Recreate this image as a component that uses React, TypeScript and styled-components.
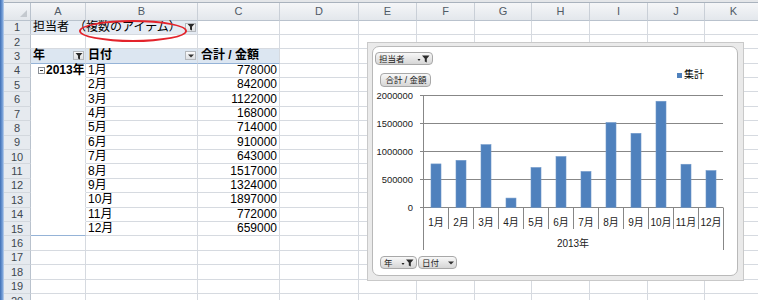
import React from "react";
import styled, { createGlobalStyle } from "styled-components";

const GlobalStyle = createGlobalStyle`
  html, body {
    margin: 0;
    padding: 0;
    background: #fff;
    overflow: hidden;
  }
  body {
    font-family: "Liberation Sans", "Noto Sans CJK JP", sans-serif;
    color: #000;
  }
`;

const COLS = ["A", "B", "C", "D", "E", "F", "G", "H", "I", "J", "K"];
const WIDTHS = [55, 112, 82, 79, 58, 58, 57, 58, 58, 57, 58];
const ROW_COUNT = 20;

const months = [
  "1月", "2月", "3月", "4月", "5月", "6月",
  "7月", "8月", "9月", "10月", "11月", "12月",
];
const amounts = [
  778000, 842000, 1122000, 168000, 714000, 910000,
  643000, 1517000, 1324000, 1897000, 772000, 659000,
];

const GRID_LINE = "#d6dae0";
const PIVOT_LINE = "#95b3d7";

const Funnel: React.FC<{ arrow?: boolean }> = ({ arrow }) => (
  <svg width={arrow ? 13 : 8} height="8" viewBox={arrow ? "0 0 13 8" : "0 0 8 8"}>
    {arrow && <path d="M0.5 4 H3.5 L2 6 Z" fill="#222" />}
    <path
      d={arrow ? "M5 0.5 H12.5 L9.8 3.8 V7.5 L7.8 6.5 V3.8 Z" : "M0.5 1 H7.5 L5 3.8 V7.5 L3 6.5 V3.8 Z"}
      fill="#2b2b2b"
    />
  </svg>
);

const DownArrow: React.FC = () => (
  <svg width="6" height="4" viewBox="0 0 6 4">
    <path d="M0 0.5 H6 L3 3.5 Z" fill="#333" />
  </svg>
);

const Sheet = styled.div`
  position: relative;
  display: flex;
  width: 758px;
  height: 300px;
  overflow: hidden;
`;

const WindowEdge = styled.div`
  width: 4px;
  flex: none;
  background: linear-gradient(to right, #3e6fb5, #7ea6dc 70%, #c9d8ec);
`;

const Main = styled.div`
  display: flex;
  flex-direction: column;
  flex: 1;
`;

const TopBar = styled.div`
  height: 2px;
  flex: none;
  background: #e4e6e9;
  border-bottom: 1px solid #a9b2bd;
`;

const Grid = styled.div`
  display: grid;
  grid-template-columns: 27px ${WIDTHS.map((w) => `${w}px`).join(" ")};
  grid-template-rows: 17.5px repeat(${ROW_COUNT}, 14.4px);
`;

const Corner = styled.div`
  position: relative;
  background: linear-gradient(#f3f5f8, #e2e6eb);
  border-right: 1px solid #b9c2cd;
  border-bottom: 1px solid #b9c2cd;
  box-sizing: border-box;

  &::after {
    content: "";
    position: absolute;
    right: 3px;
    bottom: 3px;
    border-left: 7px solid transparent;
    border-bottom: 7px solid #c4c9cf;
  }
`;

const ColHeader = styled.div`
  display: flex;
  align-items: center;
  justify-content: center;
  box-sizing: border-box;
  background: linear-gradient(#f5f6f8, #e3e7ec);
  border-right: 1px solid #c9cfd7;
  border-bottom: 1px solid #b9c2cd;
  font-size: 11px;
  color: #505a66;
`;

const RowHeader = styled.div`
  display: flex;
  align-items: center;
  justify-content: center;
  box-sizing: border-box;
  background: #e6eaef;
  border-right: 1px solid #b9c2cd;
  border-bottom: 1px solid #d3d8de;
  font-size: 11px;
  color: #404850;
`;

const Cell = styled.div<{
  $fill?: string;
  $bold?: boolean;
  $right?: boolean;
  $noBottom?: boolean;
  $bottom?: string;
  $pad?: number;
}>`
  position: relative;
  display: flex;
  align-items: center;
  justify-content: ${(p) => (p.$right ? "flex-end" : "space-between")};
  box-sizing: border-box;
  min-width: 0;
  padding: 0 ${(p) => (p.$right ? 2 : 0)}px 0 ${(p) => p.$pad ?? 2}px;
  background: ${(p) => p.$fill ?? "#fff"};
  border-right: 1px solid ${GRID_LINE};
  border-bottom: 1px solid
    ${(p) => (p.$noBottom ? "#fff" : p.$bottom ?? GRID_LINE)};
  font-size: 12px;
  font-weight: ${(p) => (p.$bold ? 700 : 400)};
  line-height: 13px;
  white-space: nowrap;
`;

const CellText = styled.span<{ $shift?: number }>`
  margin-left: ${(p) => p.$shift ?? 0}px;
`;

const CellButton = styled.span`
  display: flex;
  align-items: center;
  justify-content: center;
  width: 11px;
  height: 9px;
  margin-right: 1px;
  box-sizing: border-box;
  border: 1px solid #b4b8bd;
  background: linear-gradient(#fbfbfb, #dcdfe3);
`;

const CollapseBox = styled.span`
  position: relative;
  display: inline-block;
  width: 7px;
  height: 7px;
  margin-right: 1px;
  box-sizing: border-box;
  border: 1px solid #8a8f96;
  background: #fff;

  &::after {
    content: "";
    position: absolute;
    left: 1px;
    right: 1px;
    top: 2px;
    height: 1px;
    background: #333;
  }
`;

const Ellipse = styled.span`
  position: absolute;
  left: -7px;
  top: -1px;
  width: 108px;
  height: 22px;
  box-sizing: border-box;
  border: 2px solid #e3232b;
  border-radius: 50%;
  z-index: 2;
  pointer-events: none;
`;

/* ---------- chart ---------- */

const ChartFrame = styled.div`
  position: absolute;
  left: 367px;
  top: 42px;
  width: 377px;
  height: 239px;
  box-sizing: border-box;
  padding: 3px 5px 4px 4px;
  background: #eaeaea;
  border: 1px solid #c9c9c9;
  z-index: 3;
`;

const ChartArea = styled.div`
  display: flex;
  flex-direction: column;
  height: 100%;
  box-sizing: border-box;
  background: #fff;
  border: 1px solid #b9b9b9;
  border-radius: 7px;
  font-family: "Liberation Sans", "Noto Sans CJK JP", sans-serif;
`;

const ChartRow = styled.div<{ $top: number; $left: number }>`
  display: flex;
  align-items: flex-start;
  justify-content: space-between;
  margin-top: ${(p) => p.$top}px;
  padding-left: ${(p) => p.$left}px;
`;

const ButtonGroup = styled.div`
  display: flex;
  gap: 1px;
`;

const FieldButton = styled.div<{ $w: number; $h?: number; $center?: boolean }>`
  display: flex;
  align-items: center;
  justify-content: ${(p) => (p.$center ? "center" : "space-between")};
  width: ${(p) => p.$w}px;
  height: ${(p) => p.$h ?? 13}px;
  box-sizing: border-box;
  padding: 0 2px 0 3px;
  border: 1px solid #a8a8a8;
  border-radius: 4px;
  background: linear-gradient(#f8f8f8, #d6d6d6);
  font-size: 8.5px;
  line-height: 10px;
  color: #222;
  white-space: nowrap;
`;

const Legend = styled.div`
  display: flex;
  align-items: center;
  gap: 2px;
  margin: -4px 33px 0 0;
  font-size: 10px;
  line-height: 12px;
`;

const LegendKey = styled.span`
  width: 5px;
  height: 5px;
  background: #4f81bd;
`;

const PlotSvg = styled.svg`
  display: block;
  flex: none;
  font-family: "Liberation Sans", "Noto Sans CJK JP", sans-serif;
`;

const PLOT_L = 50;
const PLOT_R = 350;
const BASE = 120.5;
const STEP = 28;
const CAT_W = 25;

const Chart: React.FC = () => (
  <ChartFrame>
    <ChartArea>
      <ChartRow $top={5} $left={2}>
        <FieldButton $w={58}>
          <span>担当者</span>
          <Funnel arrow />
        </FieldButton>
      </ChartRow>
      <ChartRow $top={8} $left={7}>
        <FieldButton $w={51} $h={14} $center>
          合計 / 金額
        </FieldButton>
        <Legend>
          <LegendKey />
          <span>集計</span>
        </Legend>
      </ChartRow>
      <PlotSvg width="364" height="165" viewBox="0 0 364 165">
        {[0, 1, 2, 3, 4].map((k) => {
          const y = BASE - k * STEP;
          return (
            <g key={k}>
              <line x1={PLOT_L - 3} x2={PLOT_R} y1={y} y2={y} stroke="#878787" strokeWidth="1" />
              <text x={40} y={y + 3.4} fontSize="9.4" textAnchor="end" fill="#222">
                {k * 500000}
              </text>
            </g>
          );
        })}
        <line x1={PLOT_L + 0.5} x2={PLOT_L + 0.5} y1={BASE - 4 * STEP} y2={163} stroke="#878787" />
        <line x1={PLOT_R + 0.5} x2={PLOT_R + 0.5} y1={BASE} y2={163} stroke="#878787" />
        {amounts.map((v, i) => {
          const h = (v / 2000000) * 4 * STEP;
          const cx = PLOT_L + CAT_W * i + CAT_W / 2;
          return (
            <rect
              key={i}
              x={cx - 5 + 0.5}
              y={BASE - h}
              width={10}
              height={h}
              fill="#4f81bd"
              stroke="#6f97c9"
              strokeWidth="0.6"
            />
          );
        })}
        {months.map((m, i) => {
          const cx = PLOT_L + CAT_W * i + CAT_W / 2 + 0.5;
          return (
            <g key={m}>
              {i > 0 && (
                <line
                  x1={PLOT_L + CAT_W * i + 0.5}
                  x2={PLOT_L + CAT_W * i + 0.5}
                  y1={BASE}
                  y2={142}
                  stroke="#878787"
                />
              )}
              <text x={cx} y={138.5} fontSize="10" textAnchor="middle" fill="#222">
                {m}
              </text>
            </g>
          );
        })}
        <text x={200} y={160} fontSize="10" textAnchor="middle" fill="#222">
          2013年
        </text>
      </PlotSvg>
      <ChartRow $top={4} $left={7}>
        <ButtonGroup>
          <FieldButton $w={37}>
            <span>年</span>
            <Funnel arrow />
          </FieldButton>
          <FieldButton $w={39}>
            <span>日付</span>
            <DownArrow />
          </FieldButton>
        </ButtonGroup>
      </ChartRow>
    </ChartArea>
  </ChartFrame>
);

/* ---------- sheet ---------- */

const HEADER_FILL = "#dce6f1";
const FILTER_FILL = "#e5ebf3";

function renderPivotCells(row: number): React.ReactNode[] {
  const cells: React.ReactNode[] = [];
  const key = (c: string) => `${c}${row}`;

  if (row === 1) {
    cells.push(
      <Cell key={key("A")} $fill={FILTER_FILL}>
        <span>担当者</span>
      </Cell>,
      <Cell key={key("B")} $fill={FILTER_FILL} $pad={0}>
        <CellText $shift={-12}>（複数のアイテム）</CellText>
        <CellButton>
          <Funnel />
        </CellButton>
        <Ellipse />
      </Cell>,
      <Cell key={key("C")} />
    );
  } else if (row === 3) {
    cells.push(
      <Cell key={key("A")} $fill={HEADER_FILL} $bold $bottom={PIVOT_LINE}>
        <span>年</span>
        <CellButton>
          <Funnel />
        </CellButton>
      </Cell>,
      <Cell key={key("B")} $fill={HEADER_FILL} $bold $bottom={PIVOT_LINE}>
        <span>日付</span>
        <CellButton>
          <DownArrow />
        </CellButton>
      </Cell>,
      <Cell key={key("C")} $fill={HEADER_FILL} $bold $bottom={PIVOT_LINE} $pad={3}>
        <span>合計 / 金額</span>
      </Cell>
    );
  } else if (row >= 4 && row <= 15) {
    const i = row - 4;
    cells.push(
      <Cell
        key={key("A")}
        $bold
        $pad={7}
        $noBottom={row < 15}
        $bottom={row === 15 ? PIVOT_LINE : undefined}
      >
        {row === 4 && (
          <span>
            <CollapseBox />
            2013年
          </span>
        )}
      </Cell>,
      <Cell key={key("B")}>
        <span>{months[i]}</span>
      </Cell>,
      <Cell key={key("C")} $right>
        {amounts[i]}
      </Cell>
    );
  } else {
    cells.push(<Cell key={key("A")} />, <Cell key={key("B")} />, <Cell key={key("C")} />);
  }

  for (let c = 3; c < COLS.length; c++) {
    cells.push(<Cell key={key(COLS[c])} />);
  }
  return cells;
}

const App: React.FC = () => {
  const rows = Array.from({ length: ROW_COUNT }, (_, i) => i + 1);

  return (
    <>
      <GlobalStyle />
      <Sheet>
        <WindowEdge />
        <Main>
          <TopBar />
          <Grid>
            <Corner />
            {COLS.map((c) => (
              <ColHeader key={c}>{c}</ColHeader>
            ))}
            {rows.map((r) => (
              <React.Fragment key={r}>
                <RowHeader>{r}</RowHeader>
                {renderPivotCells(r)}
              </React.Fragment>
            ))}
          </Grid>
        </Main>
        <Chart />
      </Sheet>
    </>
  );
};

export default App;
